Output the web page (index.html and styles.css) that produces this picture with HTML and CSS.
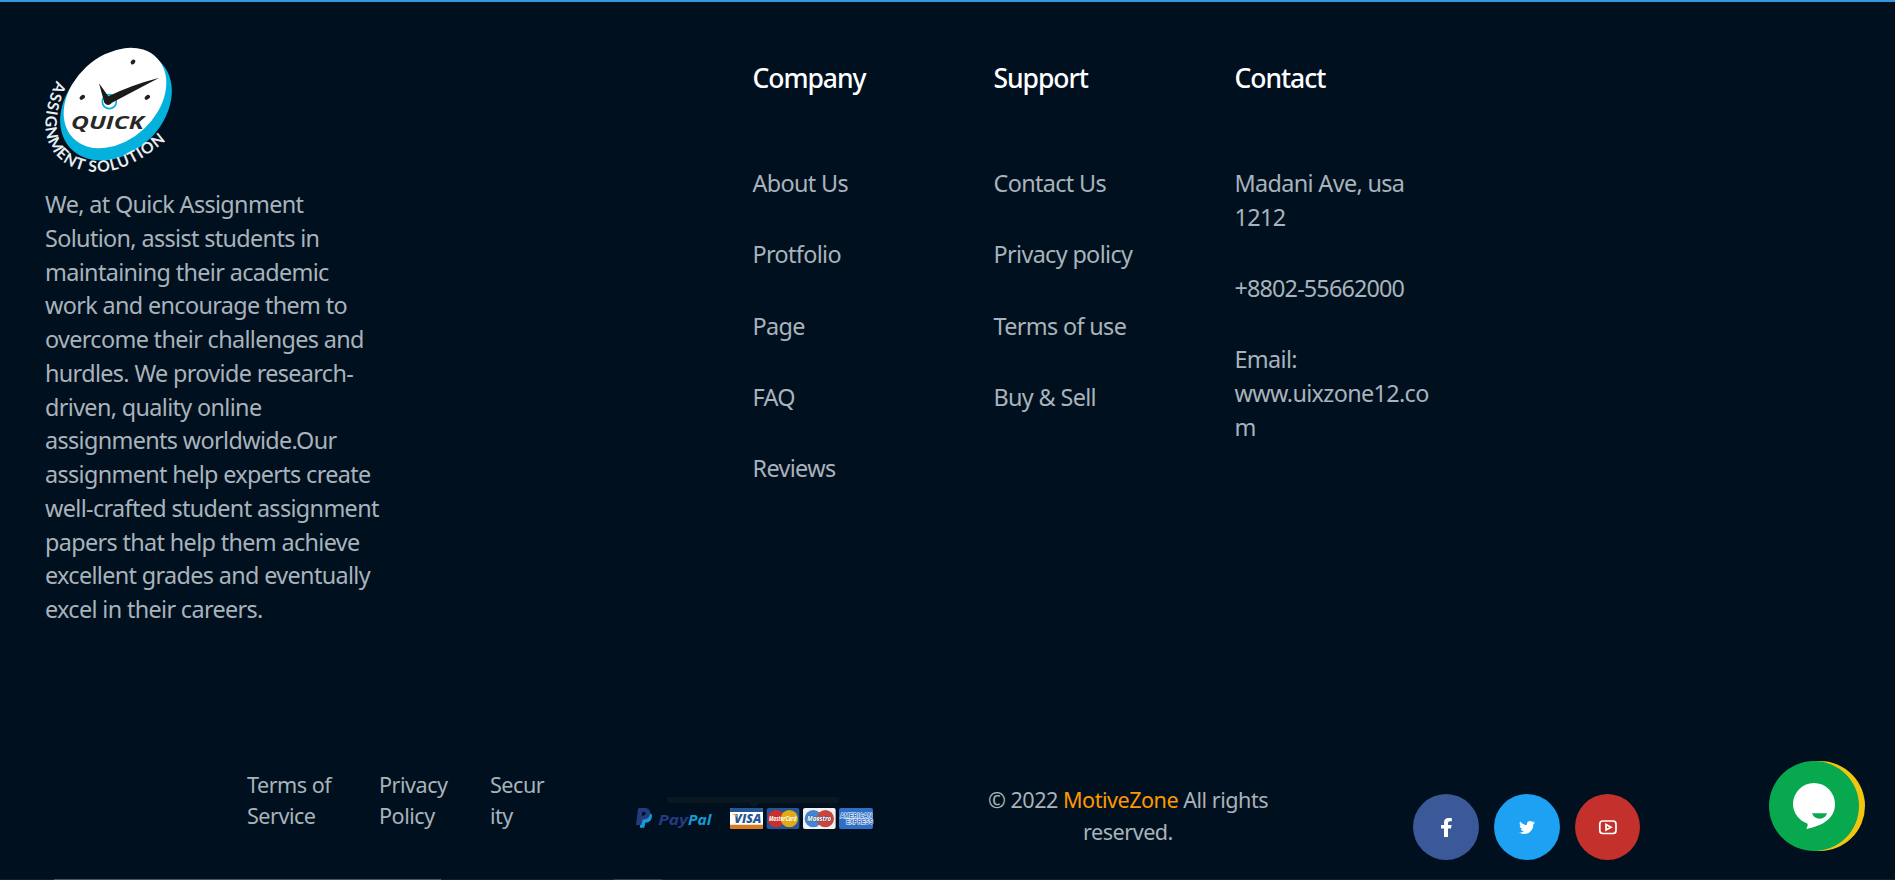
FILE: index.html
```html
<!DOCTYPE html>
<html lang="en">
<head>
<meta charset="utf-8">
<title>Quick Assignment Solution</title>
<link rel="stylesheet" href="styles.css">
</head>
<body>
<footer class="footer">
  <div class="footer-main">
    <div class="about">
      <svg class="logo" viewBox="45 48 384 372" role="img" aria-label="Quick Assignment Solution">
        <ellipse cx="258" cy="221" rx="187" ry="142" transform="rotate(-43 258 221)" fill="#04b1dd"/>
        <ellipse cx="255" cy="198" rx="174" ry="127" transform="rotate(-43 255 198)" fill="#fff"/>
        <circle cx="238" cy="209" r="21" fill="none" stroke="#04b1dd" stroke-width="5"/>
        <path d="M207 154 L235 193 Q300 160 388 137 Q310 178 246 212 Q234 226 223 212 Z" fill="#1b1b1b"/>
        <g fill="#222"><ellipse cx="309" cy="90" rx="8" ry="6" transform="rotate(-45 309 90)"/><ellipse cx="157" cy="196" rx="9" ry="6" transform="rotate(-40 157 196)"/><ellipse cx="352" cy="196" rx="9" ry="6" transform="rotate(-40 352 196)"/></g>
        <text class="logo-name" x="123" y="290" textLength="218" lengthAdjust="spacingAndGlyphs">QUICK</text>
        <path id="arc" d="M80 146 C50 205 40 270 51 315 C68 382 130 420 200 420 C280 420 350 375 412 322" fill="none"/>
        <text class="logo-tag"><textPath href="#arc" textLength="604">ASSIGNMENT SOLUTION</textPath></text>
      </svg>
      <p class="about-text">We, at Quick Assignment Solution, assist students in maintaining their academic work and encourage them to overcome their challenges and hurdles. We provide research-driven, quality online assignments worldwide.Our assignment help experts create well-crafted student assignment papers that help them achieve excellent grades and eventually excel in their careers.</p>
    </div>
    <div class="column">
      <h3>Company</h3>
      <ul><li>About Us</li><li>Protfolio</li><li>Page</li><li>FAQ</li><li>Reviews</li></ul>
    </div>
    <div class="column">
      <h3>Support</h3>
      <ul><li>Contact Us</li><li>Privacy policy</li><li>Terms of use</li><li>Buy &amp; Sell</li></ul>
    </div>
    <div class="column">
      <h3>Contact</h3>
      <ul><li>Madani Ave, usa 1212</li><li class="phone">+8802-55662000</li><li>Email: www.uixzone12.com</li></ul>
    </div>
  </div>
  <div class="footer-bottom">
    <div class="legal">
      <span class="terms">Terms of Service</span><span class="privacy">Privacy Policy</span><span class="security">Security</span>
    </div>
    <svg class="payments" viewBox="39 45 729 108" role="img" aria-label="Accepted payments">
      <path d="M141 51H658V63Q658 69 650 69H416L406 80H396L386 69H149Q141 69 141 61Z" fill="#0b1822"/>
      <path d="M60 104 Q96 92 96 108 Q95 128 76 128 L73 143 H60 Z" fill="#179bd7"/>
      <path d="M54 87 Q55 84 59 84 H77 Q93 86 90 103 Q87 119 68 119 L64 135 H48 Z" fill="#253b80"/>
      <path d="M67 96H73Q79 97 77 102Q74 108 65 107Z" fill="#00101f"/>
      <g class="paypal"><text x="115" y="134" textLength="89" lengthAdjust="spacingAndGlyphs" fill="#253b80">Pay</text><text x="204" y="134" textLength="70" lengthAdjust="spacingAndGlyphs" fill="#179bd7">Pal</text></g>
      <rect x="330" y="84" width="99" height="63" rx="6" fill="#fff"/>
      <path d="M330 96V90Q330 84 336 84H423Q429 84 429 90V96Z" fill="#265697"/><path d="M330 134H429V141Q429 147 423 147H336Q330 147 330 141Z" fill="#d97b1c"/>
      <text class="visa" x="343" y="129" textLength="81" lengthAdjust="spacingAndGlyphs">VISA</text><path d="M336 102H349L355 116Q349 106 336 102" fill="#e69b2d"/>
      <rect x="440" y="84" width="98" height="63" rx="6" fill="#265697"/><circle cx="469" cy="116" r="26" fill="#c9302c"/><circle cx="508" cy="116" r="26" fill="#dfac16"/>
      <text class="card-name" x="447" y="123" textLength="82" lengthAdjust="spacingAndGlyphs">MasterCard</text>
      <rect x="549" y="84" width="98" height="63" rx="6" fill="#f0f1f3"/><circle cx="580" cy="116" r="26" fill="#4286cf"/><circle cx="616" cy="116" r="26" fill="#cb453d"/>
      <text class="card-name maestro" x="562" y="123" textLength="71" lengthAdjust="spacingAndGlyphs">Maestro</text>
      <rect x="657" y="84" width="102" height="63" rx="6" fill="#306fc5"/>
      <text class="amex" x="660" y="114" textLength="96" lengthAdjust="spacingAndGlyphs">AMERICAN</text><text class="amex" x="678" y="133" textLength="81" lengthAdjust="spacingAndGlyphs">EXPRESS</text>
    </svg>
    <p class="copyright">© 2022 <span class="brand">MotiveZone</span> All rights reserved.</p>
    <div class="social">
      <span class="facebook"><svg viewBox="0 0 66 66"><path d="M31 43V34.500H28V31H31V28.500Q31 24 35.500 24H38.800V27.300H36.700Q35 27.300 35 29V31H38.600L38 34.500H35V43Z" fill="#fff"/></svg></span>
      <span class="twitter"><svg viewBox="0 0 66 66"><path transform="translate(25 25.5) scale(.03125)" d="M459.370 151.716c.325 4.548.325 9.097.325 13.645 0 138.720-105.583 298.558-298.558 298.558-59.452 0-114.680-17.219-161.137-47.106 8.447.974 16.568 1.299 25.340 1.299 49.055 0 94.213-16.568 130.274-44.832-46.132-.975-84.792-31.188-98.112-72.772 6.498.974 12.995 1.624 19.818 1.624 9.421 0 18.843-1.300 27.614-3.573-48.081-9.747-84.143-51.980-84.143-102.985v-1.299c13.969 7.797 30.214 12.670 47.431 13.319-28.264-18.843-46.781-51.005-46.781-87.391 0-19.492 5.197-37.360 14.294-52.954 51.655 63.675 129.300 105.258 216.365 109.807-1.624-7.797-2.599-15.918-2.599-24.040 0-57.828 46.782-104.934 104.934-104.934 30.213 0 57.502 12.670 76.670 33.137 23.715-4.548 46.456-13.320 66.599-25.340-7.798 24.366-24.366 44.833-46.132 57.827 21.117-2.273 41.584-8.122 60.426-16.243-14.292 20.791-32.161 39.308-52.628 54.253z" fill="#fff"/></svg></span>
      <span class="youtube"><svg viewBox="0 0 65 66"><rect x="24.800" y="27" width="16.200" height="12.500" rx="3" fill="none" stroke="#fff" stroke-width="1.700"/><path d="M31 30.500V36L36 33.250Z" fill="none" stroke="#fff" stroke-width="1.700"/></svg></span>
    </div>
  </div>
  <div class="page-edge"><i class="edge-long"></i><i class="edge-short"></i></div>
</footer>
<div class="chat"><svg viewBox="57 63 288 270"><circle cx="210" cy="198" r="135" fill="#f2c511"/><circle cx="192" cy="198" r="135" fill="#07a84e"/><path d="M173 251C148 242 129 220 129 192A63 63 0 0 1 255 192C255 234 222 256 169 267Q174 259 173 251Z" fill="#fff"/><path d="M186 220H231Q226 236 209 236T186 220Z" fill="#07a84e"/></svg></div>
</body>
</html>
```
FILE: styles.css
```css
* { box-sizing: border-box; }
html { background: #fff; }
body { margin: 0; font-family: "Noto Sans", "Open Sans", sans-serif; overflow: hidden; }
.footer { width: 1895px; height: 880px; display: flex; flex-direction: column; background: #00101f; border-top: 2px solid #3498db; color: #a9b3bb; }
.footer-main { display: grid; grid-template-columns: 707.5px 241px 241px 241px; height: 745px; padding: 45px 0 0 45px; font-size: 23.4px; line-height: 33.75px; letter-spacing: -.65px; }
.logo { display: block; width: 128px; height: 124px; margin: 1px 0 16px; overflow: visible; }
.logo-name { font: italic 700 54px "Open Sans", sans-serif; fill: #282828; letter-spacing: 0; }
.logo-tag { font: 700 47px Lato, sans-serif; fill: #e9edf0; letter-spacing: 0; }
.about-text { width: 340px; margin: 0; }
.column { padding-right: 40px; }
.column h3 { margin: 11.5px 0 69.5px; font-size: 26.5px; line-height: 39px; font-weight: 500; letter-spacing: -1.05px; color: #fff; }
.column ul { list-style: none; margin: 0; padding: 0; display: flex; flex-direction: column; gap: 37.5px; }
.column li { word-break: break-word; overflow-wrap: anywhere; }
.column .phone { letter-spacing: -.85px; }
.footer-bottom { display: grid; grid-template-columns: 386px 339px 340px 227px; padding-left: 247px; height: 132px; font-size: 21.6px; line-height: 31.2px; letter-spacing: -.5px; }
.legal { display: grid; grid-template-columns: 132px 111px 58px; padding-top: 22px; }
.terms { width: 100px; }
.privacy { width: 80px; }
.security { word-break: break-all; }
.payments { display: block; width: 243px; height: 36px; margin-top: 48px; }
.paypal { font: italic 700 45px "Open Sans", sans-serif; letter-spacing: 0; }
.visa { font: italic 800 35px "Open Sans", sans-serif; fill: #265697; letter-spacing: 0; }
.card-name { font: italic 700 20px "Open Sans", sans-serif; fill: #fff; letter-spacing: 0; }
.maestro { stroke: #344b70; stroke-width: 2px; paint-order: stroke; }
.amex { font: 700 20px "Liberation Sans", sans-serif; fill: #306fc5; stroke: #fff; stroke-width: 3px; paint-order: stroke; letter-spacing: 0; }
.copyright { width: 312px; margin: 37px 0 0; text-align: center; line-height: 31.6px; }
.brand { color: #ff9800; }
.social { display: flex; gap: 15px; margin: 47px 0 0 101px; }
.social span { flex: none; width: 66px; height: 66px; border-radius: 50%; }
.social .youtube { width: 65px; }
.social svg { display: block; width: 100%; height: 100%; }
.facebook { background: #3b5998; }
.twitter { background: #1da1f2; }
.youtube { background: #c4302b; }
.page-edge { display: flex; height: 1px; margin-top: auto; background: #171d29; padding-left: 54px; gap: 173px; }
.edge-long { width: 387px; background: #50555c; }
.edge-short { width: 48px; background: #3b4046; }
.chat { position: fixed; left: 1769px; top: 761px; width: 96px; height: 90px; }
.chat svg { display: block; width: 96px; height: 90px; }
```
